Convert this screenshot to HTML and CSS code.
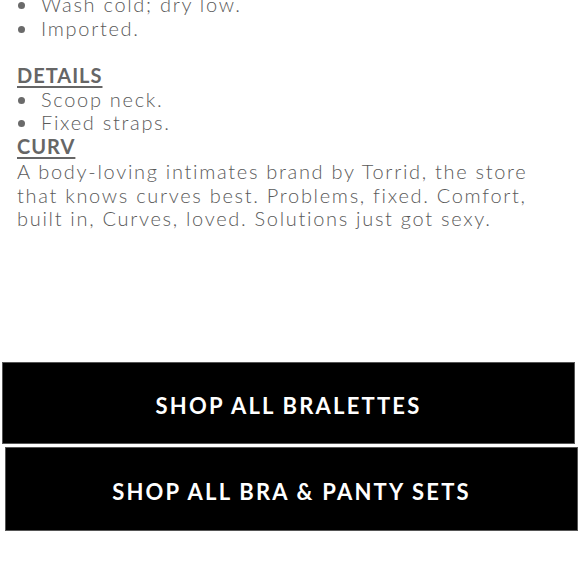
FILE: index.html
```html
<!DOCTYPE html>
<html lang="en">
<head>
<meta charset="utf-8">
<title>CURV Bralette</title>
<meta name="viewport" content="width=device-width,initial-scale=1.0">
<link rel="stylesheet" href="styles.css">
</head>
<body>

<!-- ===== 商品説明 ===== -->
<section class="desc">
  <ul class="bullets">
    <li>Wash cold; dry low.</li>
    <li>Imported.</li>
  </ul>

  <h3 class="desc-title spaced">DETAILS</h3>
  <ul class="bullets">
    <li>Scoop neck.</li>
    <li>Fixed straps.</li>
  </ul>

  <h3 class="desc-title">CURV</h3>
  <p class="desc-text">A body-loving intimates brand by Torrid, the store that knows curves best. Problems, fixed. Comfort, built in, Curves, loved. Solutions just got sexy.</p>
</section>

<!-- ===== ショップボタン ===== -->
<div class="shop-links">
  <a class="shop-btn first" href="#">SHOP ALL BRALETTES</a>
  <a class="shop-btn second" href="#">SHOP ALL BRA &amp; PANTY SETS</a>
</div>

</body>
</html>
```

FILE: styles.css
```css
/* ==== リセット & 共通 ==== */
*,*::before,*::after{box-sizing:border-box;margin:0;padding:0}
html,body{width:100%;height:100%;background:#fff;overflow:hidden}
body{font-family:"Lato","Noto Sans",sans-serif;color:#5a5a5a}

/* ==== 商品説明 ==== */
.desc{
  margin-top:-7px;
  padding:0 17px;
  font-size:20px; line-height:23.5px;
  letter-spacing:.085em;
}
.bullets{list-style:none}
.bullets li{position:relative;padding-left:24px;font-weight:300}
.bullets li::before{
  content:""; position:absolute; left:1px; top:9px;
  width:7px; height:7px; border-radius:50%;
  background:#6a6a6a;
}

.desc-title{
  font-size:20px; font-weight:700; letter-spacing:.05em;
  color:#666;
  text-decoration:underline; text-underline-offset:3px; text-decoration-thickness:2px;
}
.desc-title.spaced{margin-top:24px}
.desc-text{margin-top:2px;max-width:520px;font-weight:300}

/* ==== ショップボタン ==== */
.shop-links{
  margin-top:131px;
  display:flex; flex-direction:column; gap:3px;
}
.shop-btn{
  display:flex; align-items:center; justify-content:center;
  width:573px; height:82px; padding-top:6px;
  background:#000; border:1px solid #555;
  color:#fff; text-decoration:none;
  font-size:22px; font-weight:700; letter-spacing:.1em;
}
.shop-btn.first{margin-left:2px}
.shop-btn.second{margin-left:5px;height:84px}
```
